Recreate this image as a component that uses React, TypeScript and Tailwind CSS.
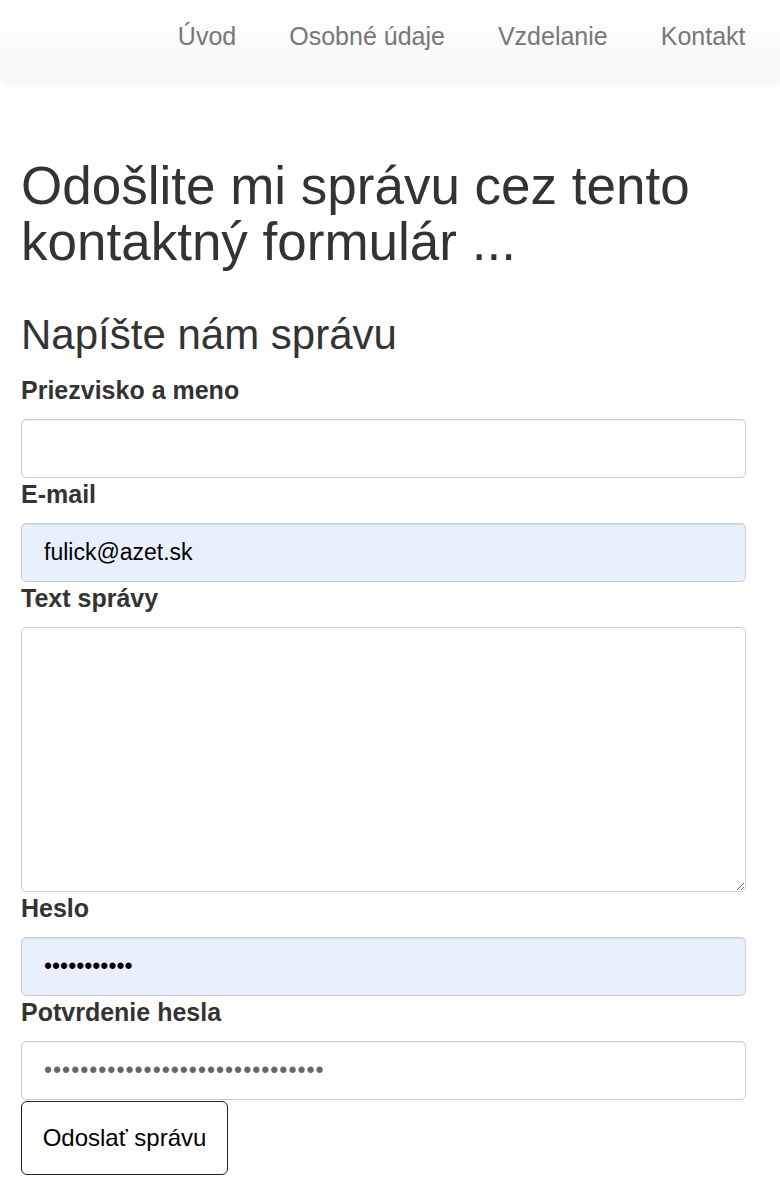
import * as React from "react";

const navItems = ["Úvod", "Osobné údaje", "Vzdelanie", "Kontakt"];

function Field({ label, children }: { label: string; children: React.ReactNode }) {
  return (
    <div>
      <label className="mt-[3px] mb-[15px] block text-[25px] font-bold leading-[27px] text-[#333]">{label}</label>
      {children}
    </div>
  );
}

const inputCls =
  "block h-[59px] w-full rounded-[5px] border border-[#ccc] px-[22px] text-[23px] outline-none shadow-[inset_0_1px_1px_rgba(0,0,0,0.075)]";

export default function App() {
  const [name, setName] = React.useState("");
  const [email, setEmail] = React.useState("fulick@azet.sk");
  const [msg, setMsg] = React.useState("");
  const [pass, setPass] = React.useState("12345678901");
  const [pass2, setPass2] = React.useState("1234567890123456789012345678901");

  return (
    <div className="min-h-[1200px] bg-white font-['Liberation_Sans',Arial,sans-serif] text-[#333]">
      <nav className="flex h-[80px] items-center justify-end bg-gradient-to-b from-white to-[#f8f8f8] pr-[8px] shadow-[0_4px_10px_rgba(0,0,0,0.05)]">
        {navItems.map((item) => (
          <a key={item} href="#" className="px-[26.5px] pb-[6px] text-[25px] text-[#777]">
            {item}
          </a>
        ))}
      </nav>

      <main className="pl-[21px] pr-[34px] pt-[78px]">
        <h1 className="text-[53px] leading-[56px] font-normal">
          Odošlite mi správu cez tento kontaktný formulár ...
        </h1>
        <h2 className="mt-[42px] mb-[19px] text-[42px] leading-[46px] font-normal">Napíšte nám správu</h2>

        <form onSubmit={(e) => e.preventDefault()}>
          <Field label="Priezvisko a meno">
            <input className={`${inputCls} bg-white text-[#555]`} value={name} onChange={(e) => setName(e.target.value)} />
          </Field>
          <Field label="E-mail">
            <input className={`${inputCls} bg-[#e8f0fe] text-black`} value={email} onChange={(e) => setEmail(e.target.value)} />
          </Field>
          <Field label="Text správy">
            <textarea
              className="block h-[265px] w-full rounded-[5px] border border-[#ccc] px-[22px] py-[10px] text-[23px] outline-none"
              value={msg}
              onChange={(e) => setMsg(e.target.value)}
            />
          </Field>
          <Field label="Heslo">
            <input type="password" className={`${inputCls} bg-[#e8f0fe] text-black`} value={pass} onChange={(e) => setPass(e.target.value)} />
          </Field>
          <Field label="Potvrdenie hesla">
            <input
              type="password"
              className={`${inputCls} bg-white text-[#666] tracking-[1px]`}
              value={pass2}
              onChange={(e) => setPass2(e.target.value)}
            />
          </Field>
          <button
            type="submit"
            className="mt-[1px] h-[74px] w-[207px] rounded-[6px] border border-[#222] bg-white text-[24px] text-black"
          >
            Odoslať správu
          </button>
        </form>
      </main>
    </div>
  );
}
